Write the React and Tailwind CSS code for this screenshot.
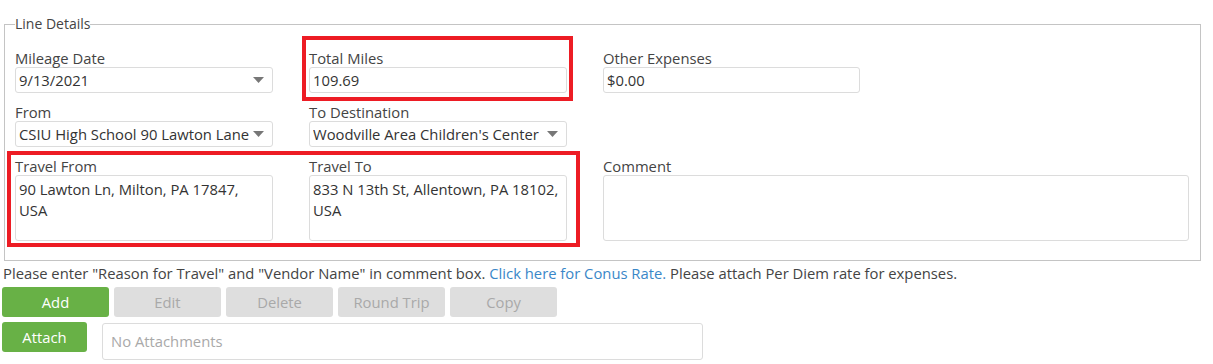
import { useState } from 'react';

const font = { fontFamily: '"Open Sans", "Noto Sans", sans-serif' };

function Label({ children }) {
    return <div className="text-[14.8px] leading-[17px] text-[#444]">{children}</div>;
}

function TextInput({ value, className = '' }) {
    return (
        <div className={`h-[26px] border border-[#dcdcdc] rounded-[3px] px-[3px] flex items-center text-[14.8px] text-[#333] bg-white ${className}`}>
            {value}
        </div>
    );
}

function SelectBox({ value }) {
    return (
        <div className="h-[26px] w-[258px] border border-[#dcdcdc] rounded-[3px] pl-[3px] pr-[8px] flex items-center text-[14.8px] text-[#333] bg-white">
            <span className="flex-1 whitespace-nowrap overflow-hidden">{value}</span>
            <svg width="11" height="7" viewBox="0 0 11 7" className="ml-1 shrink-0"><path d="M0 0h11L5.5 6z" fill="#777" /></svg>
        </div>
    );
}

function AreaBox({ value, className = '' }) {
    return (
        <div className={`h-[66px] border border-[#dcdcdc] rounded-[3px] px-[3px] pt-[3px] text-[14.8px] leading-[21px] text-[#333] bg-white ${className}`}>
            {value}
        </div>
    );
}

function Btn({ children, green, w = 'w-[107px]' }) {
    return (
        <div className={`${w} h-[30px] rounded-[3px] flex items-center justify-center text-[14.8px] ${green ? 'bg-[#68b146] text-white font-medium' : 'bg-[#dedede] text-[#a9a9a9]'}`}>
            {children}
        </div>
    );
}

export default function App() {
    const [note] = useState(null);
    return (
        <div className="relative w-[1213px] h-[364px] bg-white overflow-hidden" style={font}>
            <fieldset className="ml-[4px] mt-[15px] w-[1197px] h-[246px] border border-[#c4c4c4] px-[10px] pt-[17px] pb-0">
                <legend className="px-0 text-[14px] text-[#444] leading-[18px]">Line Details</legend>
                <div className="grid grid-cols-[258px_258px_586px] gap-x-[36px] gap-y-[11px]">
                    <div>
                        <Label>Mileage Date</Label>
                        <SelectBox value="9/13/2021" />
                    </div>
                    <div>
                        <Label>Total Miles</Label>
                        <TextInput value="109.69" className="w-[258px]" />
                    </div>
                    <div>
                        <Label>Other Expenses</Label>
                        <TextInput value="$0.00" className="w-[257px]" />
                    </div>

                    <div>
                        <Label>From</Label>
                        <SelectBox value="CSIU High School 90 Lawton Lane" />
                    </div>
                    <div>
                        <Label>To Destination</Label>
                        <SelectBox value="Woodville Area Children's Center" />
                    </div>
                    <div />

                    <div>
                        <Label>Travel From</Label>
                        <AreaBox value={<>90 Lawton Ln, Milton, PA 17847,<br />USA</>} />
                    </div>
                    <div>
                        <Label>Travel To</Label>
                        <AreaBox value={<>833 N 13th St, Allentown, PA 18102,<br />USA</>} />
                    </div>
                    <div>
                        <Label>Comment</Label>
                        <AreaBox value={note} />
                    </div>
                </div>
            </fieldset>

            <div className="pl-[3px] mt-[2px] text-[14.8px] leading-[20px] text-[#444] whitespace-nowrap">
                Please enter "Reason for Travel" and "Vendor Name" in comment box.{' '}
                <span className="text-[#3a87c8]">Click here for Conus Rate.</span> Please attach Per Diem rate for expenses.
            </div>

            <div className="flex gap-[5px] pl-[2px] mt-[4px]">
                <Btn green>Add</Btn>
                <Btn>Edit</Btn>
                <Btn>Delete</Btn>
                <Btn>Round Trip</Btn>
                <Btn>Copy</Btn>
            </div>

            <div className="flex gap-[15px] pl-[2px] mt-[5px] items-start">
                <Btn green w="w-[85px]">Attach</Btn>
                <div className="mt-[1px] w-[601px] h-[37px] border border-[#dcdcdc] rounded-[3px] px-[8px] flex items-center text-[14.8px] text-[#a9a9a9]">
                    No Attachments
                </div>
            </div>

            {/* red annotation boxes */}
            <div className="absolute left-[302px] top-[36px] w-[271px] h-[65px] border-[4px] border-[#ed1c24]" />
            <div className="absolute left-[7px] top-[151px] w-[573px] h-[96px] border-[4px] border-[#ed1c24]" />
        </div>
    );
}
